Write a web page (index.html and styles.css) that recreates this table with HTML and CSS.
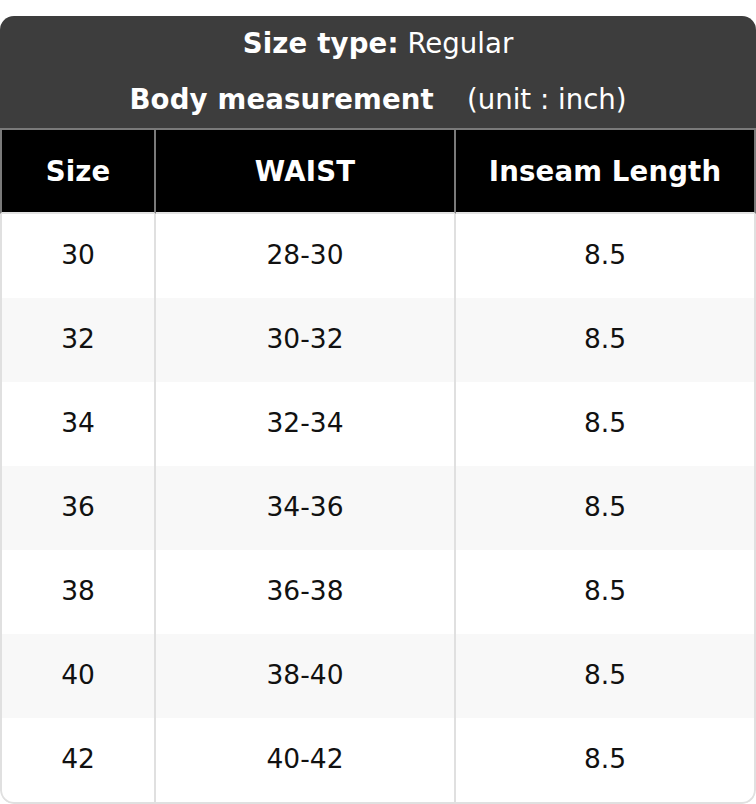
FILE: index.html
```html
<!DOCTYPE html>
<html lang="en">
<head>
<meta charset="utf-8">
<title>Size chart</title>
<link rel="stylesheet" href="styles.css">
</head>
<body>
<div class="page">
  <div class="card">
    <div class="title">
      <div class="title-line"><strong>Size type:</strong> Regular</div>
      <div class="title-line"><strong>Body measurement</strong><span class="unit">(unit : inch)</span></div>
    </div>
    <table class="chart">
      <colgroup>
        <col class="c1">
        <col class="c2">
        <col class="c3">
      </colgroup>
      <thead>
        <tr><th>Size</th><th>WAIST</th><th>Inseam Length</th></tr>
      </thead>
      <tbody>
        <tr><td>30</td><td>28-30</td><td>8.5</td></tr>
        <tr><td>32</td><td>30-32</td><td>8.5</td></tr>
        <tr><td>34</td><td>32-34</td><td>8.5</td></tr>
        <tr><td>36</td><td>34-36</td><td>8.5</td></tr>
        <tr><td>38</td><td>36-38</td><td>8.5</td></tr>
        <tr><td>40</td><td>38-40</td><td>8.5</td></tr>
        <tr><td>42</td><td>40-42</td><td>8.5</td></tr>
      </tbody>
    </table>
  </div>
</div>
</body>
</html>
```

FILE: styles.css
```css
* { box-sizing: border-box; }
html, body {
  margin: 0;
  padding: 0;
  background: #ffffff;
}
body {
  font-family: "DejaVu Sans", "Liberation Sans", sans-serif;
  color: #111111;
}
.page {
  padding-top: 16px;
  width: 756px;
}
.card {
  width: 756px;
  border-radius: 14px;
  overflow: hidden;
  background: #ffffff;
}
.title {
  background: #3d3d3d;
  color: #ffffff;
  font-size: 27.6px;
  text-align: center;
}
.title-line {
  height: 56px;
  line-height: 56px;
  white-space: nowrap;
}
.title-line strong { font-weight: 700; letter-spacing: 0.15px; }
.unit { margin-left: 33px; }
.chart {
  width: 756px;
  table-layout: fixed;
  border-collapse: separate;
  border-spacing: 0;
}
.c1 { width: 156px; }
.c2 { width: 300px; }
.c3 { width: 300px; }
.chart th {
  background: #000000;
  color: #ffffff;
  font-size: 27.6px;
  font-weight: 700;
  letter-spacing: 0.15px;
  height: 86px;
  padding: 0;
  text-align: center;
  vertical-align: middle;
  border-top: 2px solid #7a7a7a;
  border-right: 2px solid #7a7a7a;
  border-bottom: 2px solid #e2e2e2;
}
.chart th:first-child { border-left: 2px solid #7a7a7a; }
.chart td {
  font-size: 26.5px;
  height: 84px;
  padding: 0 0 3px 0;
  text-align: center;
  vertical-align: middle;
  border-right: 2px solid #e0e0e0;
  background: #ffffff;
}
.chart td:first-child { border-left: 2px solid #e0e0e0; }
.chart tbody tr:nth-child(even) td { background: #f8f8f8; }
.chart tbody tr:last-child td {
  height: 86px;
  border-bottom: 2px solid #e0e0e0;
}
.chart tbody tr:last-child td:first-child { border-bottom-left-radius: 14px; }
.chart tbody tr:last-child td:last-child { border-bottom-right-radius: 14px; }
```
